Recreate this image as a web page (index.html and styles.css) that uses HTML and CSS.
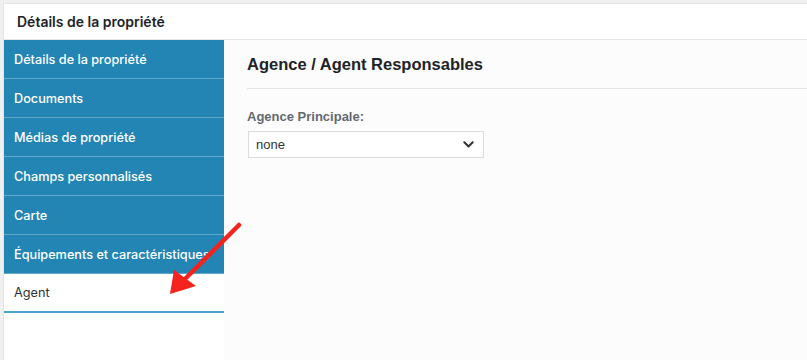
FILE: index.html
```html
<!DOCTYPE html>
<html lang="fr">
<head>
<meta charset="utf-8">
<link rel="stylesheet" href="styles.css">
</head>
<body>
<div class="panel">
  <div class="panel-head">Détails de la propriété</div>
  <div class="panel-body">
    <ul class="tabs">
      <li class="tab">Détails de la propriété</li>
      <li class="tab">Documents</li>
      <li class="tab">Médias de propriété</li>
      <li class="tab">Champs personnalisés</li>
      <li class="tab">Carte</li>
      <li class="tab">Équipements et caractéristiques</li>
      <li class="tab active">Agent</li>
    </ul>
    <div class="content">
      <h2 class="section-title">Agence / Agent Responsables</h2>
      <label class="field-label">Agence Principale:</label>
      <div class="select">
        <span>none</span>
        <svg class="chev" width="11" height="7" viewBox="0 0 11 7"><path d="M1.3 1.3 L5.5 5.5 L9.7 1.3" fill="none" stroke="#2c3338" stroke-width="2" stroke-linecap="round" stroke-linejoin="round"/></svg>
      </div>
    </div>
  </div>
  <svg class="arrow" width="100" height="90" viewBox="0 0 100 90">
    <line x1="73" y1="9" x2="20" y2="62" stroke="#f5231c" stroke-width="4.5" stroke-linecap="round"/>
    <polygon points="4,78 8,54 30,70" fill="#f5231c"/>
  </svg>
</div>
</body>
</html>
```
FILE: styles.css
```css
* { box-sizing: border-box; }
html, body { margin: 0; padding: 0; }
body {
  background: #f0f0f1;
  font-family: "Liberation Sans", Arial, sans-serif;
  color: #1d2327;
  width: 807px;
  height: 360px;
  overflow: hidden;
  padding: 3px 0 0 3px;
}
.panel {
  position: relative;
  background: #fff;
  border-top: 1px solid #e2e4e7;
  border-left: 1px solid #e2e4e7;
  height: 357px;
}
.panel-head {
  height: 36px;
  padding: 0 13px;
  display: flex;
  align-items: center;
  font-family: Inter, "Liberation Sans", sans-serif;
  font-weight: 600;
  font-size: 14px;
  border-bottom: 1px solid #e6e6e6;
}
.panel-body {
  display: flex;
  height: 320px;
}
.tabs {
  list-style: none;
  margin: 0;
  padding: 0;
  width: 220px;
  flex: none;
  background: #fff;
}
.tab {
  height: 39px;
  padding: 0 10px;
  display: flex;
  align-items: center;
  background: #2385b4;
  color: #fff;
  font-family: Inter, "Liberation Sans", sans-serif;
  font-weight: 500;
  font-size: 12.7px;
  border-bottom: 1px solid #62a7c9;
  white-space: nowrap;
  overflow: hidden;
}
.tab.active {
  background: #fff;
  color: #2c3338;
  font-weight: 400;
  border-bottom: 2px solid #4ba3cf;
}
.content {
  flex: 1;
  background: #fcfcfc;
  padding: 15px 0 0 23px;
}
.section-title {
  margin: 0;
  font-size: 16.5px;
  font-weight: 700;
  color: #1d2327;
  padding-bottom: 14px;
  border-bottom: 1px solid #e5e5e5;
}
.field-label {
  display: block;
  margin-top: 20px;
  font-size: 13px;
  font-weight: 700;
  color: #646970;
}
.select {
  margin-top: 7px;
  margin-left: 1px;
  width: 236px;
  height: 27px;
  border: 1px solid #dcdcde;
  background: #fff;
  display: flex;
  align-items: center;
  justify-content: space-between;
  padding: 0 9px 0 7px;
  font-size: 13px;
  color: #2c3338;
}
.chev { display: block; }
.arrow {
  position: absolute;
  left: 162px;
  top: 212px;
}
```
